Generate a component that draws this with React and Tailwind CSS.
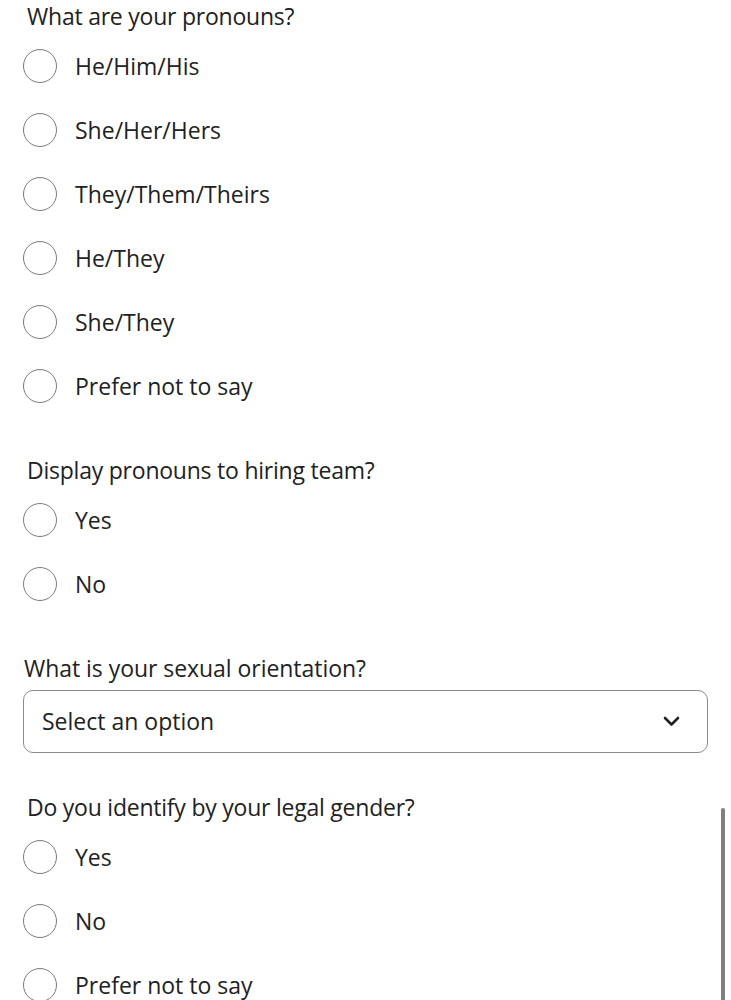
import React from "react";

const Radio = ({ label }) => (
  <label className="flex items-center h-16 cursor-pointer">
    <span className="w-[34px] h-[34px] rounded-full border-[1.5px] border-[#7a7a7a] ml-[23px] shrink-0" />
    <span className="ml-[18px] text-[23px] text-[#222]">{label}</span>
  </label>
);

const Question = ({ title, gap, children }) => (
  <div>
    <p className="text-[23px] text-[#222] pl-[27px] leading-[30px] tracking-[-0.01em]">{title}</p>
    <div className={gap}>{children}</div>
  </div>
);

export default function App() {
  return (
    <div
      className="relative w-[731px] h-[1000px] overflow-hidden bg-white"
      style={{ fontFamily: '"Open Sans", sans-serif' }}
    >
      <div className="pt-[1px]">
        <Question title="What are your pronouns?" gap="mt-[3px]">
          {["He/Him/His", "She/Her/Hers", "They/Them/Theirs", "He/They", "She/They", "Prefer not to say"].map((o) => (
            <Radio key={o} label={o} />
          ))}
        </Question>

        <div className="mt-[37px]">
          <Question title="Display pronouns to hiring team?" gap="mt-[3px]">
            <Radio label="Yes" />
            <Radio label="No" />
          </Question>
        </div>

        <div className="mt-[37px]">
          <p className="text-[23px] text-[#222] pl-[24px] leading-[30px] tracking-[-0.002em]">
            What is your sexual orientation?
          </p>
          <div className="mx-[23px] mt-[7px] h-[63px] w-[685px] rounded-[10px] border-[1.5px] border-[#8a8a8a] flex items-center justify-between pl-[18px] pr-[27px]">
            <span className="text-[23px] text-[#222]">Select an option</span>
            <svg width="17" height="11" viewBox="0 0 17 11" fill="none">
              <path d="M2 2l6.5 6.5 6.5-6.5" stroke="#222" strokeWidth="2.6" strokeLinecap="round" strokeLinejoin="round" />
            </svg>
          </div>
        </div>

        <div className="mt-[39px]">
          <Question title="Do you identify by your legal gender?" gap="mt-[3px]">
            <Radio label="Yes" />
            <Radio label="No" />
            <Radio label="Prefer not to say" />
          </Question>
        </div>
      </div>

      <div className="absolute right-[6px] top-[808px] w-[4px] h-[200px] rounded-full bg-[#808080]" />
    </div>
  );
}
